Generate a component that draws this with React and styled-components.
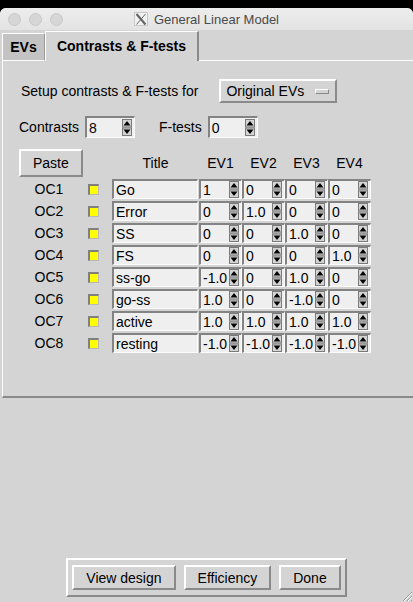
import React from 'react';
import styled, { createGlobalStyle } from 'styled-components';

const GlobalStyle = createGlobalStyle`
  html, body {
    margin: 0;
    padding: 0;
    background: #000;
  }
  body {
    font-family: 'Liberation Sans', Arial, sans-serif;
    color: #000;
  }
`;

const Screen = styled.div`
  width: 413px;
  height: 602px;
  padding-top: 8px;
  box-sizing: border-box;
  background: #000;
  overflow: hidden;
`;

const Window = styled.div`
  height: 594px;
  background: #d4d4d4;
  border-radius: 6px 6px 0 0;
  display: flex;
  flex-direction: column;
  position: relative;
  overflow: hidden;
`;

const TitleBar = styled.div`
  height: 22px;
  flex: none;
  background: linear-gradient(#ededed, #e3e3e3);
  display: grid;
  grid-template-columns: 1fr auto 1fr;
  align-items: center;
`;

const Lights = styled.div`
  display: flex;
  gap: 8px;
  padding-left: 8px;
`;

const Light = styled.span`
  width: 11px;
  height: 11px;
  border-radius: 50%;
  background: #d6d6d6;
  border: 0.5px solid #c8c8c8;
`;

const Title = styled.div`
  display: flex;
  align-items: center;
  gap: 6px;
  font-size: 13px;
  color: #4a4a4a;
`;

const TabRow = styled.div`
  height: 31px;
  flex: none;
  display: flex;
  align-items: flex-end;
  padding-left: 2px;
`;

const Tab = styled.div`
  box-sizing: border-box;
  display: flex;
  align-items: center;
  justify-content: center;
  font-weight: bold;
  font-size: 14px;
  border-top: 1px solid #fff;
  border-left: 1px solid #fff;
  width: ${p => p.$w}px;
  height: ${p => (p.$active ? 30 : 28)}px;
  background: ${p => (p.$active ? '#d4d4d4' : '#c3c3c3')};
  border-right: ${p => (p.$active ? '2px solid #8a8a8a' : '1px solid #9a9a9a')};
  border-bottom: ${p => (p.$active ? 'none' : '1px solid #fff')};
  padding-bottom: ${p => (p.$active ? 2 : 0)}px;
`;

const TabFiller = styled.div`
  flex: 1;
  border-bottom: 1px solid #fff;
`;

const Panel = styled.div`
  flex: none;
  box-sizing: border-box;
  height: 337px;
  margin-left: 2px;
  border-left: 1px solid #fff;
  border-bottom: 2px solid #8a8a8a;
  padding: 18px 0 0 16px;
  font-size: 14px;
`;

const Row = styled.div`
  display: flex;
  align-items: center;
  height: ${p => p.$h}px;
  margin-bottom: ${p => p.$mb || 0}px;
`;

const Label = styled.span`
  margin-left: ${p => p.$ml || 0}px;
  margin-right: ${p => p.$mr || 0}px;
  white-space: nowrap;
`;

const MenuButton = styled.div`
  box-sizing: border-box;
  width: 118px;
  height: 24px;
  display: flex;
  align-items: center;
  padding-left: 5px;
  border: 2px solid;
  border-color: #fff #8a8a8a #8a8a8a #fff;
`;

const MenuIndicator = styled.span`
  margin-left: auto;
  margin-right: 6px;
  width: 14px;
  height: 5px;
  box-sizing: border-box;
  border: 1px solid;
  border-color: #fff #8a8a8a #8a8a8a #fff;
`;

const Entry = styled.div`
  box-sizing: border-box;
  width: ${p => p.$w}px;
  height: ${p => p.$h || 20}px;
  background: #efefef;
  border-top: 2px solid #838383;
  border-left: 2px solid #838383;
  border-right: 1px solid #fbfbfb;
  border-bottom: 1px solid #fbfbfb;
  display: flex;
  align-items: center;
  padding-left: 2px;
  font-size: 14px;
  white-space: nowrap;
  overflow: hidden;
`;

const EntryText = styled.span`
  flex: 1;
`;

const Arrows = styled.svg`
  flex: none;
  margin-right: 2px;
`;

const Table = styled.div`
  display: grid;
  grid-template-columns: 60px 33px 87px 43px 43px 43px 43px;
  grid-template-rows: 28px;
  grid-auto-rows: 20px;
  row-gap: 2px;
  align-items: center;
`;

const HeadCell = styled.div`
  text-align: center;
  grid-column: ${p => p.$col || 'auto'};
`;

const Button = styled.button`
  box-sizing: border-box;
  height: ${p => p.$h || 25}px;
  padding: 0 12px;
  background: #d4d4d4;
  border: 2px solid;
  border-color: #fff #8a8a8a #8a8a8a #fff;
  font-family: 'Liberation Sans', Arial, sans-serif;
  font-size: 14px;
  color: #000;
  justify-self: start;
  grid-column: ${p => p.$col || 'auto'};
`;

const OcLabel = styled.div`
  text-align: center;
`;

const Check = styled.span`
  display: block;
  box-sizing: border-box;
  width: 11px;
  height: 11px;
  margin-left: 9px;
  background: #ffff00;
  border-top: 2px solid #808080;
  border-left: 2px solid #808080;
  border-right: 1px solid #b8b8b8;
  border-bottom: 1px solid #b8b8b8;
`;

const Footer = styled.div`
  flex: 1;
  display: flex;
  align-items: flex-end;
  justify-content: center;
  padding-bottom: 5px;
`;

const ButtonFrame = styled.div`
  display: flex;
  gap: 8px;
  padding: 5px 4px;
  border: 2px solid;
  border-color: #fff #8a8a8a #8a8a8a #fff;
`;

const Grip = styled.svg`
  position: absolute;
  right: 0;
  bottom: 0;
`;

const SpinArrows = () => (
  <Arrows width="10" height="17" viewBox="0 0 10 17">
    <rect x="0.5" y="0.5" width="9" height="7.5" fill="#d4d4d4" stroke="#7a7a7a" />
    <polygon points="1.5,6.5 5,2 8.5,6.5" fill="#000" />
    <rect x="0.5" y="9" width="9" height="7.5" fill="#d4d4d4" stroke="#7a7a7a" />
    <polygon points="1.5,10.5 8.5,10.5 5,15" fill="#000" />
  </Arrows>
);

const SpinBox = ({ value, w, h }) => (
  <Entry $w={w} $h={h}>
    <EntryText>{value}</EntryText>
    <SpinArrows />
  </Entry>
);

const XLogo = () => (
  <svg width="14" height="14" viewBox="0 0 14 14">
    <rect x="0.5" y="0.5" width="13" height="13" fill="#f2f2f2" stroke="#c8c8c8" />
    <path d="M2.5 2 L11.5 12.5" stroke="#666" strokeWidth="2.2" />
    <path d="M11.5 2 L2.5 12.5" stroke="#666" strokeWidth="1" />
  </svg>
);

const contrasts = [
  ['OC1', 'Go', ['1', '0', '0', '0']],
  ['OC2', 'Error', ['0', '1.0', '0', '0']],
  ['OC3', 'SS', ['0', '0', '1.0', '0']],
  ['OC4', 'FS', ['0', '0', '0', '1.0']],
  ['OC5', 'ss-go', ['-1.0', '0', '1.0', '0']],
  ['OC6', 'go-ss', ['1.0', '0', '-1.0', '0']],
  ['OC7', 'active', ['1.0', '1.0', '1.0', '1.0']],
  ['OC8', 'resting', ['-1.0', '-1.0', '-1.0', '-1.0']],
];

export default function App() {
  return (
    <Screen>
      <GlobalStyle />
      <Window>
        <TitleBar>
          <Lights>
            <Light />
            <Light />
            <Light />
          </Lights>
          <Title>
            <XLogo />
            General Linear Model
          </Title>
          <span />
        </TitleBar>

        <TabRow>
          <Tab $w={43}>EVs</Tab>
          <Tab $w={154} $active>Contrasts &amp; F-tests</Tab>
          <TabFiller />
        </TabRow>

        <Panel>
          <Row $h={24} $mb={13}>
            <Label $ml={2} $mr={21}>Setup contrasts &amp; F-tests for</Label>
            <MenuButton>
              Original EVs
              <MenuIndicator />
            </MenuButton>
          </Row>

          <Row $h={22} $mb={11}>
            <Label $mr={6}>Contrasts</Label>
            <SpinBox value="8" w={50} h={22} />
            <Label $ml={24} $mr={6}>F-tests</Label>
            <SpinBox value="0" w={50} h={22} />
          </Row>

          <Table>
            <Button $h={28} $col="1 / span 2">Paste</Button>
            <HeadCell>Title</HeadCell>
            <HeadCell>EV1</HeadCell>
            <HeadCell>EV2</HeadCell>
            <HeadCell>EV3</HeadCell>
            <HeadCell>EV4</HeadCell>
            {contrasts.map(([oc, title, vals]) => (
              <React.Fragment key={oc}>
                <OcLabel>{oc}</OcLabel>
                <Check />
                <Entry $w={86}>{title}</Entry>
                {vals.map((v, i) => (
                  <SpinBox key={i} value={v} w={43} />
                ))}
              </React.Fragment>
            ))}
          </Table>
        </Panel>

        <Footer>
          <ButtonFrame>
            <Button>View design</Button>
            <Button>Efficiency</Button>
            <Button>Done</Button>
          </ButtonFrame>
        </Footer>

        <Grip width="13" height="13" viewBox="0 0 13 13">
          <path d="M12 3 L3 12 M12 7 L7 12 M12 11 L11 12" stroke="#9a9a9a" strokeWidth="1" />
          <path d="M12 4 L4 12 M12 8 L8 12" stroke="#fff" strokeWidth="1" />
        </Grip>
      </Window>
    </Screen>
  );
}
